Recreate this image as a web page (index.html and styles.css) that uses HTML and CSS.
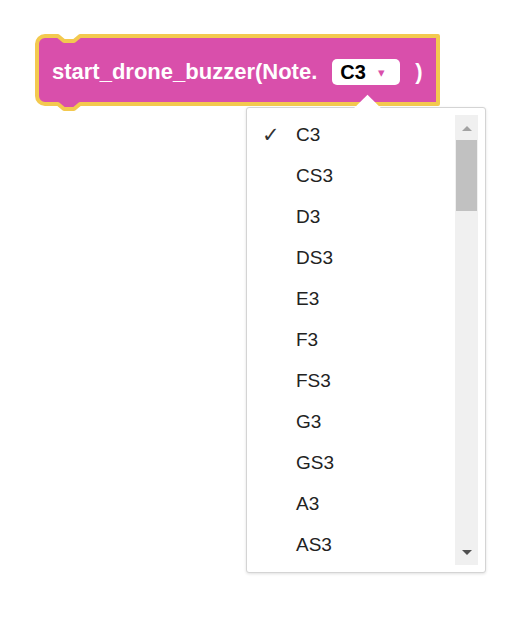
FILE: index.html
```html
<!DOCTYPE html>
<html>
<head>
<meta charset="utf-8">
<link rel="stylesheet" href="styles.css">
</head>
<body>
<div class="workspace">
  <div class="block">
    <svg class="block-shape" width="420" height="90" viewBox="0 0 420 90">
      <path d="M 37,44 a8,8 0 0 1 8,-8 H 58 l 6,5 h 10 l 6,-5 H 438 V 104 H 80 l -6,5 h -10 l -6,-5 H 45 a8,8 0 0 1 -8,-8 Z" transform="translate(-30,-30)" fill="#d94fab" stroke="#f3c94f" stroke-width="4" stroke-linejoin="round"/>
    </svg>
    <div class="block-row">
      <span class="block-text">start_drone_buzzer(Note.</span>
      <span class="field">C3<span class="field-arrow">▾</span></span>
      <span class="block-text paren">)</span>
    </div>
  </div>

  <div class="menu">
    <div class="pointer"></div>
    <div class="menu-inner">
      <ul class="items">
        <li class="item"><span class="check">✓</span>C3</li>
        <li class="item"><span class="check"></span>CS3</li>
        <li class="item"><span class="check"></span>D3</li>
        <li class="item"><span class="check"></span>DS3</li>
        <li class="item"><span class="check"></span>E3</li>
        <li class="item"><span class="check"></span>F3</li>
        <li class="item"><span class="check"></span>FS3</li>
        <li class="item"><span class="check"></span>G3</li>
        <li class="item"><span class="check"></span>GS3</li>
        <li class="item"><span class="check"></span>A3</li>
        <li class="item"><span class="check"></span>AS3</li>
      </ul>
      <div class="scrollbar">
        <svg class="sb-arrow" width="22" height="24" viewBox="0 0 22 24"><polygon points="6,16 16,16 11,11" fill="#a3a3a3"/></svg>
        <div class="thumb"></div>
        <div class="sb-space"></div>
        <svg class="sb-arrow" width="22" height="24" viewBox="0 0 22 24"><polygon points="6,9 16,9 11,14" fill="#505050"/></svg>
      </div>
    </div>
  </div>
</div>
</body>
</html>
```

FILE: styles.css
```css
html, body {
  margin: 0;
  padding: 0;
  background: #ffffff;
  font-family: "Liberation Sans", Arial, sans-serif;
}

.workspace {
  position: relative;
  width: 529px;
  height: 625px;
  overflow: hidden;
}

.block {
  position: absolute;
  left: 30px;
  top: 30px;
  width: 420px;
  height: 90px;
}

.block-shape {
  position: absolute;
  left: 0;
  top: 0;
}

.block-row {
  position: absolute;
  left: 22px;
  top: 29px;
  display: flex;
  align-items: center;
  height: 26px;
}

.block-text {
  color: #ffffff;
  font-weight: bold;
  font-size: 22px;
  line-height: 26px;
}

.paren {
  margin-left: 15px;
}

.field {
  margin-left: 15px;
  display: flex;
  align-items: center;
  background: #ffffff;
  border-radius: 5px;
  height: 26px;
  padding: 0 0 0 8px;
  width: 68px;
  box-sizing: border-box;
  color: #000000;
  font-weight: bold;
  font-size: 20px;
}

.field-arrow {
  color: #d94fab;
  font-size: 13px;
  margin-left: 12px;
  font-weight: normal;
}

.menu {
  position: absolute;
  left: 246px;
  top: 107px;
  width: 240px;
  height: 466px;
}

.pointer {
  position: absolute;
  left: 111px;
  top: -8px;
  width: 21px;
  height: 21px;
  background: #ffffff;
  transform: rotate(45deg);
  z-index: 2;
}

.menu-inner {
  position: relative;
  box-sizing: border-box;
  width: 100%;
  height: 100%;
  background: #ffffff;
  border: 1px solid #d4d4d4;
  border-radius: 3px;
  box-shadow: 0 1px 3px rgba(0, 0, 0, 0.12);
  display: flex;
  padding: 7px 7px 7px 0;
}

.items {
  list-style: none;
  margin: 0;
  padding: 0;
  margin-top: -1px;
  flex: 1;
  overflow: hidden;
}

.item {
  display: flex;
  align-items: center;
  height: 41px;
  font-size: 19px;
  color: #222222;
}

.check {
  width: 49px;
  box-sizing: border-box;
  padding-left: 15px;
  font-size: 21px;
  color: #333333;
}

.scrollbar {
  width: 23px;
  background: #f0f0f0;
  display: flex;
  flex-direction: column;
  align-items: center;
}

.sb-arrow {
  flex: none;
  display: block;
}

.thumb {
  width: 21px;
  height: 71px;
  background: #c1c1c1;
  margin-top: 1px;
}

.sb-space {
  flex: 1;
}
```
